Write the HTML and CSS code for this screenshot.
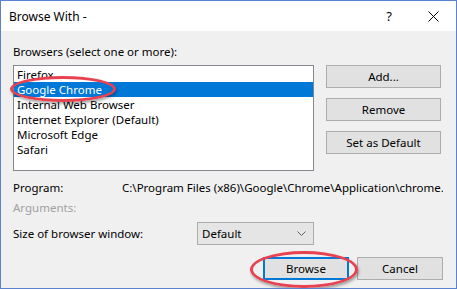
FILE: index.html
```
<!DOCTYPE html>
<html lang="en">
<head>
    <meta charset="UTF-8">
    <title>Browse With</title>
    <link rel="stylesheet" href="styles.css">
</head>
<body>
    <div class="window">
        <div class="titlebar">
            <span class="title">Browse With -</span>
            <span class="help">?</span>
            <svg class="close" width="11" height="11" viewBox="0 0 11 11">
                <path d="M0.5 0.5 L10.5 10.5 M10.5 0.5 L0.5 10.5" stroke="#000" stroke-width="1" fill="none"/>
            </svg>
        </div>
        <div class="content">
            <div class="label">Browsers (select one or more):</div>
            <div class="main-row">
                <ul class="listbox">
                    <li>Firefox</li>
                    <li class="selected">Google Chrome</li>
                    <li>Internal Web Browser</li>
                    <li>Internet Explorer (Default)</li>
                    <li>Microsoft Edge</li>
                    <li>Safari</li>
                </ul>
                <div class="side-buttons">
                    <button class="btn">Add...</button>
                    <button class="btn">Remove</button>
                    <button class="btn">Set as Default</button>
                </div>
            </div>
            <div class="field-row">
                <span class="field-label">Program:</span>
                <span class="path">C:\Program Files (x86)\Google\Chrome\Application\chrome.</span>
            </div>
            <div class="field-row disabled">
                <span class="field-label">Arguments:</span>
            </div>
            <div class="size-row">
                <span class="size-label">Size of browser window:</span>
                <div class="combo">
                    <span>Default</span>
                    <svg width="9" height="5" viewBox="0 0 9 5">
                        <path d="M0.5 0.5 L4.5 4.5 L8.5 0.5" stroke="#606060" stroke-width="1" fill="none"/>
                    </svg>
                </div>
            </div>
            <div class="bottom-buttons">
                <button class="btn btn-default">Browse</button>
                <button class="btn">Cancel</button>
            </div>
        </div>

        <!-- callout rings drawn over the dialog -->
        <div class="ring ring-chrome"></div>
        <div class="ring ring-browse"></div>
    </div>
</body>
</html>
```
FILE: styles.css
```
body {
    margin: 0;
    padding: 0;
    background-color: #ffffff;
    font-family: "Noto Sans", "Open Sans", sans-serif;
    font-size: 11.5px;
    color: #000000;
}
.window {
    position: relative;
    width: 457px;
    height: 289px;
    box-sizing: border-box;
    border: 1px solid #5a82cf;
    overflow: hidden;
}
.titlebar {
    height: 30px;
    display: flex;
    align-items: center;
    background-color: #ffffff;
    padding-left: 8px;
}
.title {
    flex: 1;
    font-size: 12px;
}
.help {
    font-size: 13px;
    margin-right: 36px;
}
.close {
    margin-right: 17px;
}
.content {
    height: 257px;
    box-sizing: border-box;
    background-color: #f0f0f0;
    padding: 13px 13px 0 12px;
}
.label {
    line-height: 15px;
    height: 15px;
}
.main-row {
    display: flex;
    margin-top: 6px;
}
.listbox {
    list-style: none;
    margin: 0;
    padding: 1px 0 0 0;
    width: 301px;
    height: 106px;
    box-sizing: border-box;
    border: 1px solid #828790;
    background-color: #ffffff;
}
.listbox li {
    height: 15px;
    line-height: 15px;
    padding-left: 3px;
    white-space: nowrap;
}
.listbox li.selected {
    background-color: #0078d7;
    color: #ffffff;
}
.side-buttons {
    display: flex;
    flex-direction: column;
    gap: 10px;
    margin-left: 12px;
}
.btn {
    font-family: inherit;
    font-size: 11.5px;
    color: #000000;
    background-color: #e1e1e1;
    border: 1px solid #adadad;
    padding: 0;
    margin: 0;
    box-sizing: border-box;
    height: 23px;
}
.side-buttons .btn {
    width: 115px;
}
.field-row {
    display: flex;
    height: 20px;
    line-height: 20px;
    white-space: nowrap;
}
.main-row + .field-row {
    margin-top: 7px;
}
.field-label {
    width: 109px;
    flex-shrink: 0;
}
.path {
    overflow: hidden;
}
.disabled {
    color: #a0a0a0;
}
.size-row {
    display: flex;
    align-items: center;
    margin-top: 4px;
    height: 23px;
}
.size-label {
    width: 184px;
}
.combo {
    width: 117px;
    height: 23px;
    box-sizing: border-box;
    border: 1px solid #acacac;
    background-color: #e5e5e5;
    display: flex;
    align-items: center;
    justify-content: space-between;
    padding: 0 7px 0 4px;
}
.bottom-buttons {
    display: flex;
    justify-content: flex-end;
    gap: 8px;
    margin-top: 12px;
}
.bottom-buttons .btn {
    width: 86px;
}
.btn-default {
    border: 2px solid #0078d7;
}
.ring {
    position: absolute;
    border: 3px solid #e8414f;
    border-radius: 50%;
    box-shadow: 1px 2px 3px rgba(0, 0, 0, 0.35);
}
.ring-chrome {
    left: 9px;
    top: 75px;
    width: 100px;
    height: 20px;
}
.ring-browse {
    left: 249px;
    top: 250px;
    width: 102px;
    height: 31px;
}
```
